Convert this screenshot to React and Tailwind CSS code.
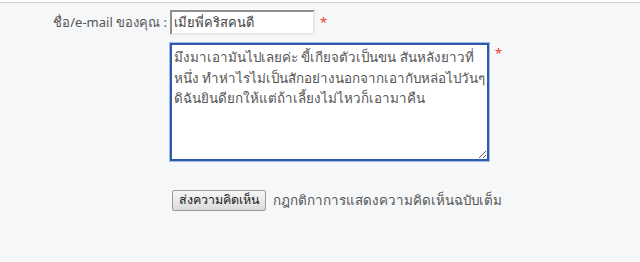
import React from 'react';

const font = { fontFamily: 'Tahoma, "Noto Sans", "DejaVu Sans", sans-serif' };

const comment =
  'มึงมาเอามันไปเลยค่ะ ขี้เกียจตัวเป็นขน สันหลังยาวที่\nหนึ่ง ทำห่าไรไม่เป็นสักอย่างนอกจากเอากับหล่อไปวันๆ\nดิฉันยินดียกให้แต่ถ้าเลี้ยงไม่ไหวก็เอามาคืน';

const Star = () => <span className="text-[#ee3a2a] text-[13px] leading-none">*</span>;

export default function App() {
  return (
    <div className="w-[640px] h-[262px] bg-[#f6f7f9] overflow-hidden" style={font}>
      {/* top rule */}
      <div className="h-[2px] bg-white" />
      <div className="h-px bg-[#d0d0d0]" />

      <div className="pt-[7px]">
        {/* name row */}
        <div className="flex items-center">
          <label className="w-[167px] text-right text-[13px] text-[#555]">
            ชื่อ/e-mail ของคุณ :
          </label>
          <input
            readOnly
            value="เมียพี่คริสคนดี"
            className="ml-[3px] w-[145px] h-[25px] px-[2px] bg-white text-[13px] text-[#444] outline-none border-2 border-t-[#8f8f8f] border-l-[#8f8f8f] border-b-[#e8e8e8] border-r-[#e8e8e8]"
            style={font}
          />
          <span className="ml-[5px] mt-[-4px]"><Star /></span>
        </div>

        {/* comment row */}
        <div className="flex items-start mt-[8px] pl-[170px]">
          <textarea
            readOnly
            value={comment}
            className="w-[319px] h-[118px] px-[2px] py-[2px] bg-white text-[13.4px] leading-[20.5px] text-[#555] border-2 border-[#2e5aa8] outline-none shadow-[0_0_0_1px_#9fbce8] whitespace-pre resize"
            style={font}
          />
          <span className="ml-[6px] mt-[-3px]"><Star /></span>
        </div>

        {/* actions */}
        <div className="flex items-center mt-[29px] pl-[172px]">
          <button
            type="button"
            className="h-[21px] w-[94px] px-0 text-center text-[12.5px] text-[#222] border border-[#9a9a9a] rounded-[2px] bg-gradient-to-b from-[#f6f6f6] to-[#dcdcdc] whitespace-nowrap"
            style={{ ...font, fontWeight: 400 }}
          >
            ส่งความคิดเห็น
          </button>
          <span className="ml-[7px] text-[13.4px] text-[#555]">กฎกติกาการแสดงความคิดเห็นฉบับเต็ม</span>
        </div>
      </div>
    </div>
  );
}
